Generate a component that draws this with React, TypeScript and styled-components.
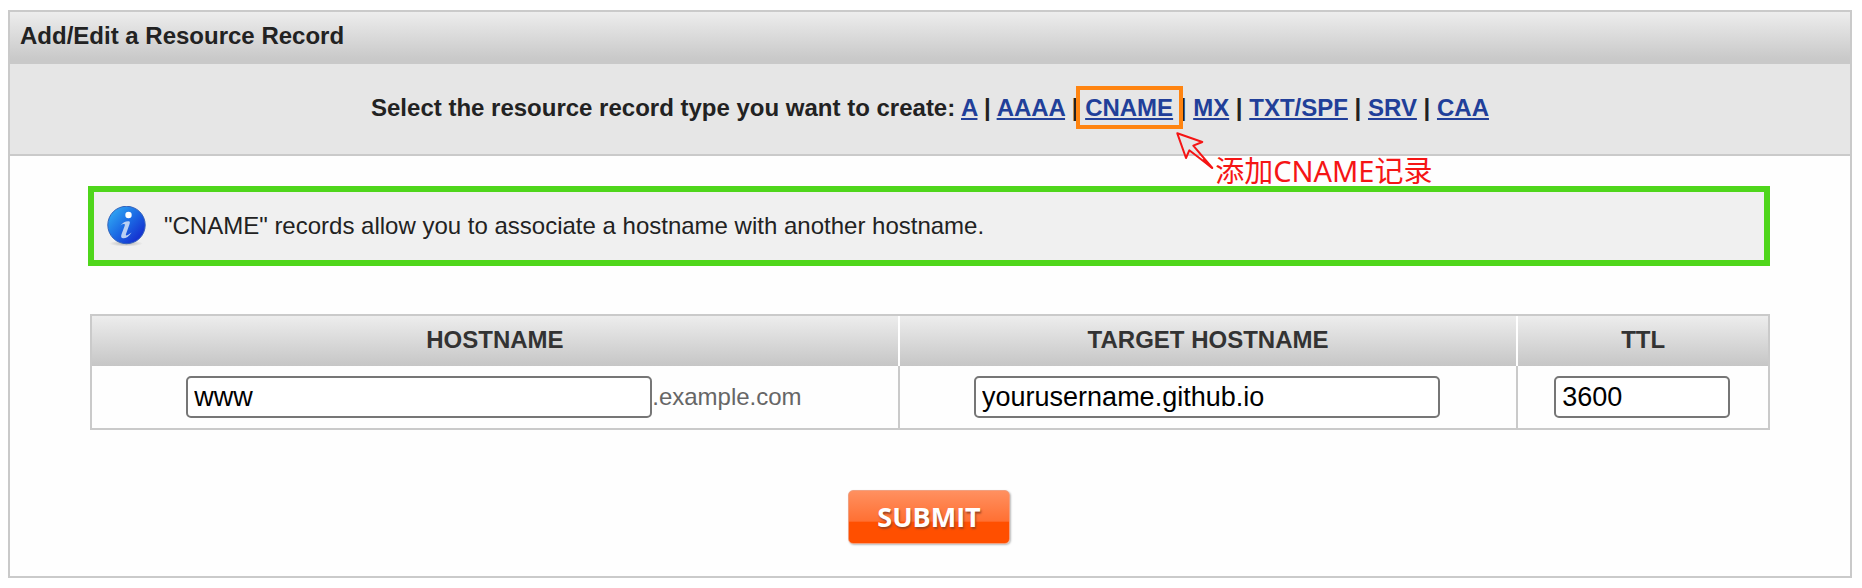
import React from "react";
import styled, { createGlobalStyle } from "styled-components";

const GlobalStyle = createGlobalStyle`
  *, *::before, *::after { box-sizing: border-box; }
  body {
    margin: 0;
    background: #fff;
    color: #222;
    font: 24px/28px "Liberation Sans", Arial, sans-serif;
  }
`;

const Panel = styled.form`
  margin: 10px 10px 10px 8px;
  border: 2px solid #cacaca;
  background: #fefefe;
`;

const PanelTitle = styled.h1`
  margin: 0;
  padding: 10px 10px 14px;
  font-size: 24px;
  line-height: 28px;
  background: linear-gradient(#ededed, #c9c9c9 90%);
`;

const TypeBar = styled.nav`
  padding: 30px 20px 32px;
  border-bottom: 2px solid #cacaca;
  background: #e6e6e6;
  text-align: center;
  font-weight: bold;
`;

const TypeLink = styled.a`
  color: #213f99;
  text-decoration: underline;
  text-decoration-thickness: 2px;
  text-underline-offset: 2px;
  text-decoration-skip-ink: none;
`;

const Marked = styled.span`
  position: relative;
  display: inline-block;
`;

const MarkFrame = styled.span`
  position: absolute;
  inset: -8px -10px -7px -9px;
  border: 4px solid #ff8410;
  pointer-events: none;
`;

const MarkArrow = styled.svg`
  position: absolute;
  top: 37px;
  left: 90px;
  width: 40px;
  height: 40px;
`;

const MarkNote = styled.span`
  position: absolute;
  top: 59px;
  left: 130px;
  color: #f51515;
  font: 29px/36px "Noto Sans", "Noto Sans CJK SC", sans-serif;
  white-space: nowrap;
`;

const Content = styled.div`
  padding: 30px 80px 32px;
`;

const InfoBox = styled.div`
  display: flex;
  align-items: center;
  gap: 18px;
  margin-left: -2px;
  min-height: 80px;
  padding: 4px 12px;
  border: 6px solid #4fd61b;
  background: #f0f0f0;
`;

const InfoIcon = styled.svg`
  flex: none;
  width: 40px;
  height: 40px;
`;

const RecordTable = styled.table`
  width: 100%;
  margin-top: 48px;
  border: 2px solid #cacaca;
  border-spacing: 0;
  table-layout: fixed;
`;

const HeadCell = styled.th<{ $width: string }>`
  width: ${(p) => p.$width};
  height: 50px;
  padding: 10px 0 12px;
  color: #333;
  background: linear-gradient(#ededed, #c6c6c6);
  border-right: 2px solid #fff;
  &:last-child { border-right: 0; }
`;

const Cell = styled.td`
  padding: 10px 2px 10px 0;
  text-align: center;
  border-right: 2px solid #cacaca;
  &:last-child { border-right: 0; }
`;

const Field = styled.div`
  display: flex;
  align-items: center;
  justify-content: center;
`;

const TextInput = styled.input<{ $width: number }>`
  width: ${(p) => p.$width}px;
  height: 42px;
  padding: 2px 6px;
  border: 2px solid #767676;
  border-radius: 5px;
  background: #fff;
  color: #000;
  font: 27px/30px "Liberation Sans", Arial, sans-serif;
`;

const Suffix = styled.span`
  color: #666;
`;

const Actions = styled.div`
  display: flex;
  justify-content: center;
  margin-top: 60px;
  padding-right: 2px;
`;

const SubmitButton = styled.button`
  width: 162px;
  height: 54px;
  padding: 0;
  border: 1px solid #f0a080;
  border-radius: 5px;
  background: linear-gradient(#ff9060, #ff7033 58%, #ff4f00 60%, #ff4f00);
  box-shadow: 1px 1px 2px #bbb;
  color: #fff;
  font: bold 27px/36px "Open Sans", "Noto Sans", sans-serif;
  text-shadow: 1px 2px 2px #a04520;
`;

const recordTypes = ["A", "AAAA", "CNAME", "MX", "TXT/SPF", "SRV", "CAA"];

function MarkedLink({ label }: { label: string }) {
  return (
    <Marked>
      <TypeLink href="#cname">{label}</TypeLink>
      <MarkFrame />
      <MarkArrow viewBox="0 0 40 40" fill="none" stroke="#f51515" strokeWidth="2" strokeLinejoin="round" aria-hidden="true">
        <path d="M2.3 2.3 27.3 11 18.3 14.7 37.3 37 14.3 19.3 11 27Z" />
        <path d="M28 28.5 37 37" />
      </MarkArrow>
      <MarkNote>添加CNAME记录</MarkNote>
    </Marked>
  );
}

export default function App() {
  return (
    <>
      <GlobalStyle />
      <Panel onSubmit={(e) => e.preventDefault()}>
        <PanelTitle>Add/Edit a Resource Record</PanelTitle>
        <TypeBar>
          Select the resource record type you want to create:{" "}
          {recordTypes.map((type, i) => (
            <React.Fragment key={type}>
              {i > 0 && " | "}
              {type === "CNAME" ? (
                <MarkedLink label={type} />
              ) : (
                <TypeLink href={`#${type.toLowerCase()}`}>{type}</TypeLink>
              )}
            </React.Fragment>
          ))}
        </TypeBar>
        <Content>
          <InfoBox>
            <InfoIcon viewBox="0 0 40 40" aria-hidden="true">
              <defs>
                <linearGradient id="ball" x1="0.1" y1="0.15" x2="0.85" y2="0.85">
                  <stop offset="0" stopColor="#2fa4f2" />
                  <stop offset="0.5" stopColor="#1b6ae4" />
                  <stop offset="1" stopColor="#1530cf" />
                </linearGradient>
                <radialGradient id="shade">
                  <stop offset="0" stopColor="#888" stopOpacity="0.6" />
                  <stop offset="1" stopColor="#888" stopOpacity="0" />
                </radialGradient>
              </defs>
              <ellipse cx="20" cy="37.5" rx="17" ry="3" fill="url(#shade)" />
              <circle cx="20.5" cy="19" r="18.7" fill="url(#ball)" stroke="#3562ba" strokeWidth="1" />
              <circle cx="22.5" cy="9" r="3.2" fill="#fff" />
              <path
                d="M14.3 19.5C17 16.2 20 14.8 23 15.2C24.4 15.5 23.8 17.2 23.4 18.4L20 28C19.4 30 20.5 30.2 25.6 26.4C23 30.6 19.7 32.5 17 32.3C14.7 32 15 29.8 15.7 27.8L18.7 19.7C19.3 17.9 18 17.3 14.3 19.5Z"
                fill="#b9d0f3"
              />
            </InfoIcon>
            <span>"CNAME" records allow you to associate a hostname with another hostname.</span>
          </InfoBox>
          <RecordTable>
            <thead>
              <tr>
                <HeadCell scope="col" $width="48.2%">HOSTNAME</HeadCell>
                <HeadCell scope="col" $width="36.9%">TARGET HOSTNAME</HeadCell>
                <HeadCell scope="col" $width="14.9%">TTL</HeadCell>
              </tr>
            </thead>
            <tbody>
              <tr>
                <Cell>
                  <Field>
                    <TextInput $width={466} aria-label="Hostname" defaultValue="www" />
                    <Suffix>.example.com</Suffix>
                  </Field>
                </Cell>
                <Cell>
                  <Field>
                    <TextInput $width={466} aria-label="Target hostname" defaultValue="yourusername.github.io" />
                  </Field>
                </Cell>
                <Cell>
                  <Field>
                    <TextInput $width={176} aria-label="TTL" defaultValue="3600" />
                  </Field>
                </Cell>
              </tr>
            </tbody>
          </RecordTable>
          <Actions>
            <SubmitButton type="submit">SUBMIT</SubmitButton>
          </Actions>
        </Content>
      </Panel>
    </>
  );
}
